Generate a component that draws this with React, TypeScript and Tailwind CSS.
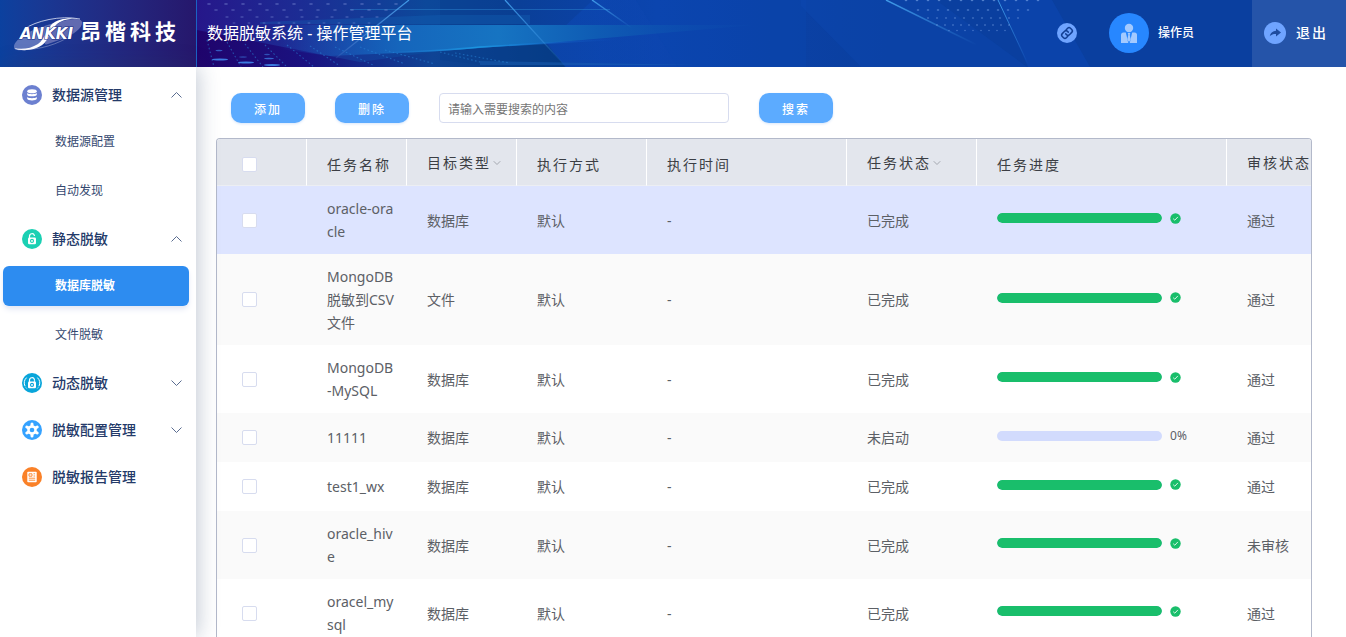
import React from "react";
import { ChevronDown } from "lucide-react";

type Task = {
  name: string;
  target: string;
  mode: string;
  time: string;
  status: string;
  progress: number;
  review: string;
};

const tasks: Task[] = [
  { name: "oracle-oracle", target: "数据库", mode: "默认", time: "-", status: "已完成", progress: 100, review: "通过" },
  { name: "MongoDB脱敏到CSV文件", target: "文件", mode: "默认", time: "-", status: "已完成", progress: 100, review: "通过" },
  { name: "MongoDB-MySQL", target: "数据库", mode: "默认", time: "-", status: "已完成", progress: 100, review: "通过" },
  { name: "11111", target: "数据库", mode: "默认", time: "-", status: "未启动", progress: 0, review: "通过" },
  { name: "test1_wx", target: "数据库", mode: "默认", time: "-", status: "已完成", progress: 100, review: "通过" },
  { name: "oracle_hive", target: "数据库", mode: "默认", time: "-", status: "已完成", progress: 100, review: "未审核" },
  { name: "oracel_mysql", target: "数据库", mode: "默认", time: "-", status: "已完成", progress: 100, review: "通过" },
];

type Column = { title: string; sortable?: boolean };

const columns: Column[] = [
  { title: "任务名称" },
  { title: "目标类型", sortable: true },
  { title: "执行方式" },
  { title: "执行时间" },
  { title: "任务状态", sortable: true },
  { title: "任务进度" },
  { title: "审核状态", sortable: true },
];

function Logo() {
  return (
    <svg className="h-9 w-[70px] shrink-0" viewBox="13 14 70 36" aria-label="ANKKI">
      <path
        d="M14 45c0-7 13-15 27-20l10-3c7-3 5 0 3 4-4 9-8 17-18 20-8 2.500-22 4-22-1z"
        fill="#8795d0"
        opacity="0.65"
      />
      <path
        d="M82 20c1 6-9 13-20 17l-14 5c-3 1-4 0-2-3 4-8 8-17 17-20 8-2.500 18-3 19 1z"
        fill="#8688c4"
        opacity="0.65"
      />
      <path d="M14 46c6 3.500 20 3 28-3 7-5 8-14 14-20 5-5 14-7 22-6-9-2-20 0-26 5-6 6-7 15-14 20-7 4.500-16 6-24 4z" fill="#fff" />
      <path d="M24 27C36 19 60 13 80 17" fill="none" stroke="#dfe4f6" strokeWidth="0.8" />
      <path d="M15 47c18 2 36-2 52-11" fill="none" stroke="#dfe4f6" strokeWidth="0.600" opacity="0.6" />
      <text x="20" y="37" fill="#fff" stroke="#1a2f88" strokeWidth="1.200" paintOrder="stroke" fontFamily="DejaVu Sans" fontSize="15" fontStyle="italic" fontWeight="700">
        ANKKI
      </text>
    </svg>
  );
}

function dotRows(startX: number, endX: number, y: number, step: number, w: number, fill: string, opacity: number) {
  const dots: React.ReactNode[] = [];
  for (let x = startX; x <= endX; x += step) {
    dots.push(<ellipse key={`${x}-${y}`} cx={x} cy={y} rx={w} ry={0.7} fill={fill} opacity={opacity} />);
  }
  return dots;
}

function HeaderArt() {
  return (
    <svg
      className="absolute inset-0 h-full w-full"
      viewBox="197 0 1149 67"
      preserveAspectRatio="xMinYMin slice"
      aria-hidden="true"
    >
      <defs>
        <linearGradient id="base" gradientUnits="userSpaceOnUse" x1="197" x2="1346" y1="0" y2="0">
          <stop offset="0" stopColor="#26178a" />
          <stop offset="0.09" stopColor="#1c2c94" />
          <stop offset="0.2" stopColor="#0c489a" />
          <stop offset="0.28" stopColor="#0a3f98" />
          <stop offset="0.4" stopColor="#0c44ad" />
          <stop offset="0.6" stopColor="#0a3f9f" />
          <stop offset="1" stopColor="#0a3f9f" />
        </linearGradient>
        <linearGradient id="low" gradientUnits="userSpaceOnUse" x1="197" x2="560" y1="0" y2="0">
          <stop offset="0" stopColor="#20046c" />
          <stop offset="0.3" stopColor="#1a1280" />
          <stop offset="0.65" stopColor="#0f4495" />
          <stop offset="1" stopColor="#033a82" />
        </linearGradient>
        <linearGradient id="beam" gradientUnits="userSpaceOnUse" x1="280" x2="765" y1="0" y2="0">
          <stop offset="0" stopColor="#1d62c8" stopOpacity="0" />
          <stop offset="0.25" stopColor="#1566bc" />
          <stop offset="0.45" stopColor="#1674c2" />
          <stop offset="0.65" stopColor="#0f5cb4" />
          <stop offset="1" stopColor="#0b46ac" stopOpacity="0.2" />
        </linearGradient>
        <linearGradient id="edge" gradientUnits="userSpaceOnUse" x1="380" x2="620" y1="0" y2="0">
          <stop offset="0" stopColor="#1f7bd6" stopOpacity="0" />
          <stop offset="0.4" stopColor="#1b95e0" />
          <stop offset="1" stopColor="#1152c4" stopOpacity="0" />
        </linearGradient>
        <linearGradient id="facet" gradientUnits="userSpaceOnUse" x1="600" x2="740" y1="0" y2="0">
          <stop offset="0" stopColor="#0d4cc0" />
          <stop offset="1" stopColor="#0c47b0" stopOpacity="0" />
        </linearGradient>
        <linearGradient id="ray" x1="0" x2="1" y1="0" y2="1">
          <stop offset="0" stopColor="#3f9ae8" />
          <stop offset="1" stopColor="#3f9ae8" stopOpacity="0" />
        </linearGradient>
        <linearGradient id="rayUp" x1="1" x2="0" y1="0" y2="1">
          <stop offset="0" stopColor="#3f9ae8" />
          <stop offset="1" stopColor="#7fa9ea" stopOpacity="0.1" />
        </linearGradient>
      </defs>
      <rect x="197" width="1149" height="67" fill="url(#base)" />
      <path d="M197 30 360 62 440 51 545 43 566 67H197z" fill="url(#low)" />
      <path d="M490 0h15l60 67h-60l-65-7V0z" fill="#083f8c" opacity="0.45" />
      <path d="M593 0h43l42 67H565l-18-24z" fill="url(#facet)" opacity="0.35" />
      <path d="M636 0h170v67H678z" fill="#0c4ab8" opacity="0.2" />
      <path d="M801 0h135l91 67H861L801 6z" fill="#0d48b2" opacity="0.4" />
      <path d="M998 0h54l38 67h-62z" fill="#0d4abb" opacity="0.4" />
      <path d="M280 25h475L548 43 440 51l-110 5-100-14z" fill="url(#beam)" />
      <path d="M260 22 440 15h90v9H260z" fill="#1363b8" opacity="0.35" />
      <path d="M350 9.5h260" stroke="#2a83cf" strokeWidth="1" opacity="0.5" />
      <path d="M380 53Q440 51 480 47L620 39" fill="none" stroke="url(#edge)" strokeWidth="1.6" />
      <path d="M480 61 700 65H480z" fill="#1a60b4" opacity="0.5" />
      <path d="M409 0 336 58" stroke="url(#rayUp)" strokeWidth="1.2" />
      <path d="M505 0 566 67" stroke="url(#ray)" strokeWidth="1.2" />
      <path d="M592 0 632 28" stroke="url(#ray)" strokeWidth="1.4" />
      <path d="M886 0 977 45" stroke="url(#ray)" strokeWidth="1.4" />
      <path d="M998 0 1028 64" stroke="url(#ray)" strokeWidth="1" />
      {dotRows(209, 400, 4, 17, 2, "#8a9ade", 0.5)}
      {dotRows(216, 390, 10, 17, 2, "#8a9ade", 0.45)}
      {dotRows(227, 380, 17, 15, 1.8, "#8a9ade", 0.4)}
      {dotRows(234, 380, 23, 15, 1.6, "#8a9ade", 0.35)}
      {dotRows(906, 1046, 0.5, 11, 1.3, "#7fa8ea", 0.6)}
      {dotRows(918, 1036, 10, 10, 1.3, "#7fa8ea", 0.6)}
      {dotRows(928, 1026, 18, 9, 1.2, "#7fa8ea", 0.5)}
      {dotRows(937, 1014, 25, 8, 1.1, "#7fa8ea", 0.5)}
      {dotRows(949, 1008, 30.5, 8, 1, "#7fa8ea", 0.4)}
      <g stroke="#2a86d8" strokeWidth="1.1" strokeDasharray="1.6 2.4" opacity="0.55" fill="none">
        <path d="M207 40 214 67M227 42l14 25M245 44l18 23M265 45l22 22M287 45l27 22M310 46l30 20M335 47l38 18M360 47l45 17M385 50l50 14M440 52l40 10M455 53l55 10" />
      </g>
      <g fill="#3c7be0">
        <ellipse cx="219" cy="50.500" rx="3.500" ry="0.800" opacity="0.7" />
        <ellipse cx="220" cy="59.500" rx="8" ry="1" />
        <ellipse cx="246" cy="62.500" rx="8" ry="1" />
        <ellipse cx="269" cy="58.500" rx="5" ry="0.800" opacity="0.8" />
        <ellipse cx="272" cy="65" rx="8" ry="1" />
        <ellipse cx="243" cy="57" rx="4" ry="0.800" opacity="0.5" />
        <ellipse cx="267" cy="54.500" rx="3" ry="0.800" opacity="0.6" />
      </g>
    </svg>
  );
}

function Header() {
  return (
    <header className="flex h-[67px] shrink-0 text-white">
      <div className="flex w-[196px] shrink-0 items-center bg-linear-to-r from-[#0b419f] to-[#26176c] pl-[13px]">
        <Logo />
        <span className="-ml-[3px] pb-1 text-[21px] font-bold tracking-[4px] whitespace-nowrap">昂楷科技</span>
      </div>
      <div className="relative flex min-w-0 grow border-l border-[#1a63c4] bg-[#0a3f9f]">
        <HeaderArt />
        <div className="relative flex grow items-center justify-between pb-0.5 pl-[10px]">
          <h1 className="text-base whitespace-nowrap">数据脱敏系统 - 操作管理平台</h1>
          <div className="flex items-center">
            <a href="#link" aria-label="链接" className="mr-8 block">
              <svg className="size-5" viewBox="0 0 20 20">
                <circle cx="10" cy="10" r="10" fill="#6fa4ff" />
                <g transform="rotate(-45 10 10)" fill="none" stroke="#123f94" strokeWidth="1.500" strokeLinecap="round">
                  <path d="M8.200 12.900H6.200a2 2 0 0 1-2-2V9.100a2 2 0 0 1 2-2h3.300a2 2 0 0 1 2 2v1.200" />
                  <path d="M11.800 7.100h2a2 2 0 0 1 2 2v1.800a2 2 0 0 1-2 2h-3.300a2 2 0 0 1-2-2V9.700" />
                </g>
              </svg>
            </a>
            <svg className="size-10" viewBox="0 0 40 40" aria-hidden="true">
              <circle cx="20" cy="20" r="20" fill="#2787ff" />
              <g fill="#a3caff">
                <circle cx="20" cy="15" r="4.200" />
                <path d="M14.500 19.500h2.300L19.300 30H12v-8a2.500 2.500 0 0 1 2.500-2.500z" />
                <path d="M25.500 19.500h-2.300L20.700 30H28v-8a2.500 2.500 0 0 0-2.500-2.500z" />
                <path d="M18.700 20h2.600l-.6 1.800 1 4.700L20 29l-1.700-2.500 1-4.700z" />
              </g>
            </svg>
            <span className="ml-[9px] text-xs font-medium">操作员</span>
          </div>
        </div>
        <button
          type="button"
          className="relative ml-[58px] flex w-[94px] shrink-0 items-center bg-[#2554a9] pb-0.5 pl-3 text-sm font-medium tracking-[2px]"
        >
          <svg className="mr-[10px] size-[22px]" viewBox="0 0 22 22" aria-hidden="true">
            <circle cx="11" cy="11" r="11" fill="#6fa4ff" />
            <path d="M12 6.500 17 10.500 12 14.500v-2.600c-2.600-.1-4.600.5-6.200 2.400.5-3.200 2.600-5.200 6.200-5.500z" fill="#1f4c9f" />
          </svg>
          退出
        </button>
      </div>
    </header>
  );
}

function DatabaseIcon() {
  return (
    <svg className="size-5" viewBox="0 0 20 20" aria-hidden="true">
      <circle cx="10" cy="10" r="10" fill="#6c80d0" />
      <ellipse cx="10" cy="6.200" rx="4.800" ry="2" fill="#fff" />
      <path d="M5.200 8c1.200 1.600 8.400 1.600 9.600 0v1.800c-.6 2-9 2-9.600 0z" fill="#fff" />
      <path d="M5.200 12c1.200 1.600 8.400 1.600 9.600 0v1.800c-.6 2.200-9 2.200-9.600 0z" fill="#fff" />
    </svg>
  );
}

function LockShape() {
  return (
    <>
      <path d="M7.500 9V7.200a2.500 2.500 0 0 1 4.900-.7" fill="none" stroke="#fff" strokeWidth="1.200" strokeLinecap="round" />
      <rect x="6" y="8.600" width="8" height="6.600" rx="1.200" fill="#fff" />
    </>
  );
}

function StaticIcon() {
  return (
    <svg className="size-5" viewBox="0 0 20 20" aria-hidden="true">
      <circle cx="10" cy="10" r="10" fill="#1bd0b3" />
      <LockShape />
      <circle cx="10" cy="11.900" r="1.500" fill="none" stroke="#1bd0b3" strokeWidth="1.100" />
    </svg>
  );
}

function DynamicIcon() {
  return (
    <svg className="size-5" viewBox="0 0 20 20" aria-hidden="true">
      <circle cx="10" cy="10" r="10" fill="#08a5da" />
      <LockShape />
      <path d="M12.500 8.800V7.200" stroke="#fff" strokeWidth="1.200" />
      <circle cx="10" cy="11.900" r="1.500" fill="none" stroke="#08a5da" strokeWidth="1.100" />
      <path d="M4.600 4.600a7.600 7.600 0 0 0 0 10.800M15.400 4.600a7.600 7.600 0 0 1 0 10.800" fill="none" stroke="#fff" strokeWidth="1" strokeDasharray="9 1.500" />
    </svg>
  );
}

function GearIcon() {
  return (
    <svg className="size-5" viewBox="0 0 20 20" aria-hidden="true">
      <circle cx="10" cy="10" r="10" fill="#35a2ff" />
      <circle cx="10" cy="10" r="4.800" fill="#fff" />
      <path d="M10 4v12M4.800 7l10.400 6M15.200 7 4.800 13" stroke="#fff" strokeWidth="3" strokeLinecap="round" />
      <circle cx="10" cy="10" r="2.300" fill="#35a2ff" />
    </svg>
  );
}

function ReportIcon() {
  return (
    <svg className="size-5" viewBox="0 0 20 20" aria-hidden="true">
      <circle cx="10" cy="10" r="10" fill="#fa8128" />
      <rect x="5.300" y="4.800" width="9.400" height="10.400" rx="0.800" fill="#fff" />
      <path d="M7 6.800h3v2.400H7zM11.500 6.800h1.600M11.500 9h1.600M6.800 11.200h6.400M6.800 13.200h6.400" fill="none" stroke="#fa8128" strokeWidth="0.900" />
    </svg>
  );
}

function Caret({ up }: { up: boolean }) {
  return (
    <svg className="h-3 w-3" viewBox="0 0 12 12" fill="none" stroke="#5a6c90" strokeWidth="1" aria-hidden="true">
      <path d={up ? "M1.500 8.500 6.500 3.500 11.500 8.500" : "M1.500 3.500 6.500 8.500 11.500 3.500"} />
    </svg>
  );
}

function Group({ icon, label, open, children }: { icon: React.ReactNode; label: string; open?: boolean; children?: React.ReactNode }) {
  return (
    <li>
      <button type="button" className="flex h-[47px] w-full items-center pr-[14px] pl-[22px] text-sm font-medium text-[#243a69]">
        {icon}
        <span className="ml-[10px] grow text-left">{label}</span>
        {open !== undefined && <Caret up={open} />}
      </button>
      {children && <ul className="flex flex-col gap-px">{children}</ul>}
    </li>
  );
}

function SubItem({ label, active }: { label: string; active?: boolean }) {
  return (
    <li className="flex h-12 items-center pr-[7px] pl-[3px] text-xs text-[#34486f]">
      <a
        href="#menu"
        className={
          active
            ? "flex h-10 grow items-center rounded-md bg-[#2d8cf0] pl-[52px] font-bold text-white shadow-md shadow-[#e3e7f4]"
            : "flex h-10 grow items-center pl-[52px]"
        }
      >
        {label}
      </a>
    </li>
  );
}

function Sidebar() {
  return (
    <nav className="relative w-[196px] shrink-0 bg-white pt-1 shadow-[2px_0_20px_rgba(35,60,100,0.28)]">
      <ul>
        <Group icon={<DatabaseIcon />} label="数据源管理" open>
          <SubItem label="数据源配置" />
          <SubItem label="自动发现" />
        </Group>
        <Group icon={<StaticIcon />} label="静态脱敏" open>
          <SubItem label="数据库脱敏" active />
          <SubItem label="文件脱敏" />
        </Group>
        <Group icon={<DynamicIcon />} label="动态脱敏" open={false} />
        <Group icon={<GearIcon />} label="脱敏配置管理" open={false} />
        <Group icon={<ReportIcon />} label="脱敏报告管理" />
      </ul>
    </nav>
  );
}

function ActionButton({ children }: { children: React.ReactNode }) {
  return (
    <button
      type="button"
      className="h-[30px] w-[74px] rounded-[10px] bg-[#5cabff] pt-1 text-xs font-medium tracking-[2px] text-white shadow-sm shadow-[#dce9fa]"
    >
      {children}
    </button>
  );
}

function Checkbox({ label }: { label: string }) {
  return (
    <input
      type="checkbox"
      aria-label={label}
      className="block size-[15px] appearance-none rounded-[2px] border border-[#d7dcef] bg-white checked:bg-[#2d8cf0]"
    />
  );
}

function Progress({ value }: { value: number }) {
  return (
    <div className="flex items-center pb-1">
      <div
        role="progressbar"
        aria-valuenow={value}
        aria-label="任务进度"
        className="h-[10px] w-[165px] shrink-0 overflow-hidden rounded-full bg-[#d2dbfd]"
      >
        <div className="h-full rounded-full bg-[#19be6b]" style={{ width: `${value}%` }} />
      </div>
      {value === 100 ? (
        <svg className="ml-2 size-[11px]" viewBox="0 0 11 11" aria-hidden="true">
          <circle cx="5.500" cy="5.500" r="5.200" fill="#19be6b" />
          <path d="M3.200 5.700 4.800 7.200 7.900 3.900" fill="none" stroke="#d9f6e6" strokeWidth="1" />
        </svg>
      ) : (
        <span className="ml-2 text-xs leading-[18px]">{value}%</span>
      )}
    </div>
  );
}

function TaskTable() {
  return (
    <div className="mt-[15px] overflow-hidden rounded-t border border-b-0 border-[#b3b9ca]">
      <table className="w-full min-w-[1140px] table-fixed border-separate border-spacing-0 text-left text-sm leading-[23px] text-[#5c6066]">
        <colgroup>
          <col className="w-[90px]" />
          <col className="w-[100px]" />
          <col className="w-[110px]" />
          <col className="w-[130px]" />
          <col className="w-[200px]" />
          <col className="w-[130px]" />
          <col className="w-[250px]" />
          <col />
        </colgroup>
        <thead className="bg-[#e3e6ed] text-[#3b3e44]">
          <tr>
            <th className="h-[47px] border-r border-b border-r-white border-b-[#eceef3] pt-1 pl-[25px]">
              <Checkbox label="全选" />
            </th>
            {columns.map((c) => (
              <th
                key={c.title}
                className="border-r border-b border-r-white border-b-[#eceef3] pl-5 font-normal tracking-[2px] whitespace-nowrap"
              >
                {c.sortable ? (
                  <button type="button" className="flex items-center tracking-[2px]">
                    {c.title}
                    <ChevronDown className="mt-0.5 size-3 shrink-0 text-[#a4a8b0]" strokeWidth={2} />
                  </button>
                ) : (
                  <span className="block pt-1">{c.title}</span>
                )}
              </th>
            ))}
          </tr>
        </thead>
        <tbody>
          {tasks.map((t, i) => (
            <tr key={t.name} className={i === 0 ? "bg-[#dde4ff]" : i % 2 === 1 ? "bg-[#fafafa]" : "bg-white"}>
              <td className="h-[49px] pl-[25px]">
                <Checkbox label={t.name} />
              </td>
              <td className="py-[11px] pr-[10px] pl-5 break-all">{t.name}</td>
              <td className="pl-5">{t.target}</td>
              <td className="pl-5">{t.mode}</td>
              <td className="pl-5">{t.time}</td>
              <td className="pl-5">{t.status}</td>
              <td className="pl-5">
                <Progress value={t.progress} />
              </td>
              <td className="pl-5">{t.review}</td>
            </tr>
          ))}
        </tbody>
      </table>
    </div>
  );
}

export default function App() {
  return (
    <div className="flex h-screen flex-col overflow-hidden bg-white font-['Noto_Sans','Noto_Sans_CJK_SC',sans-serif]">
      <Header />
      <div className="flex min-h-0 grow">
        <Sidebar />
        <main className="min-w-0 grow overflow-hidden pt-[26px] pr-[34px] pl-5">
          <div className="flex items-center gap-[30px] pl-[15px]">
            <ActionButton>添加</ActionButton>
            <ActionButton>删除</ActionButton>
            <input
              type="text"
              aria-label="搜索内容"
              placeholder="请输入需要搜索的内容"
              className="h-[30px] w-[290px] rounded border border-[#d7dcef] px-2 pt-0.5 text-xs placeholder:text-[#757575]"
            />
            <ActionButton>搜索</ActionButton>
          </div>
          <TaskTable />
        </main>
      </div>
    </div>
  );
}
